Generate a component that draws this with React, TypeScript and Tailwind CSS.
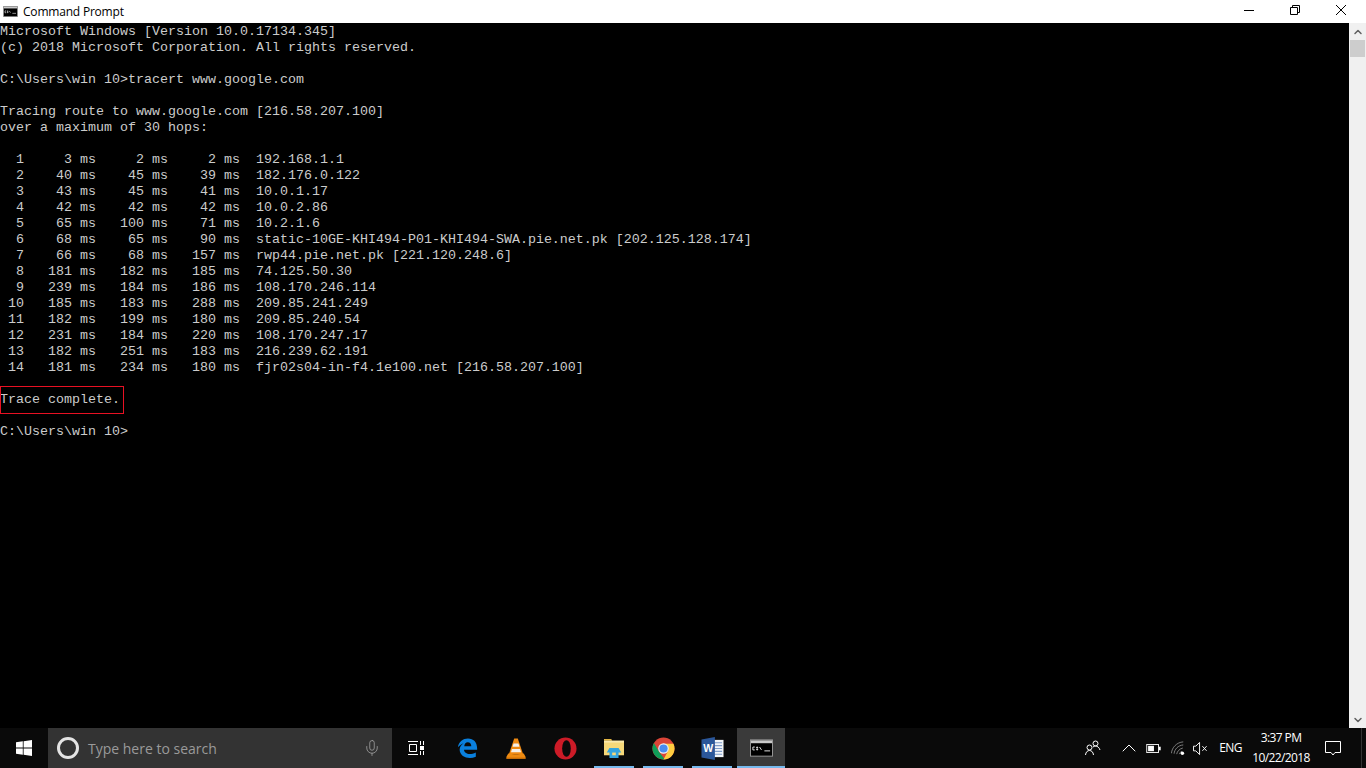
import { ChevronUp, ChevronDown, Mic } from 'lucide-react';

const consoleText = `Microsoft Windows [Version 10.0.17134.345]
(c) 2018 Microsoft Corporation. All rights reserved.

C:\\Users\\win 10>tracert www.google.com

Tracing route to www.google.com [216.58.207.100]
over a maximum of 30 hops:

  1     3 ms     2 ms     2 ms  192.168.1.1
  2    40 ms    45 ms    39 ms  182.176.0.122
  3    43 ms    45 ms    41 ms  10.0.1.17
  4    42 ms    42 ms    42 ms  10.0.2.86
  5    65 ms   100 ms    71 ms  10.2.1.6
  6    68 ms    65 ms    90 ms  static-10GE-KHI494-P01-KHI494-SWA.pie.net.pk [202.125.128.174]
  7    66 ms    68 ms   157 ms  rwp44.pie.net.pk [221.120.248.6]
  8   181 ms   182 ms   185 ms  74.125.50.30
  9   239 ms   184 ms   186 ms  108.170.246.114
 10   185 ms   183 ms   288 ms  209.85.241.249
 11   182 ms   199 ms   180 ms  209.85.240.54
 12   231 ms   184 ms   220 ms  108.170.247.17
 13   182 ms   251 ms   183 ms  216.239.62.191
 14   181 ms   234 ms   180 ms  fjr02s04-in-f4.1e100.net [216.58.207.100]

Trace complete.

C:\\Users\\win 10>`;

function CmdIcon({ className }: { className: string }) {
  return (
    <svg viewBox="0 0 24 18" className={className}>
      <rect x="0.5" y="0.5" width="23" height="17" fill="#000" stroke="#9a9a9a" />
      <rect x="1" y="1" width="22" height="3" fill="#c8c8c8" />
      <path d="M3 8h2M3 8v3h2M7 8h1v1H7zM7 10h1v1H7zM10 8l2 3M15 12h6" stroke="#e8e8e8" strokeWidth="1" fill="none" />
    </svg>
  );
}

function WindowsLogo() {
  return (
    <svg viewBox="0 0 16 16" className="w-4 h-4" fill="#fff">
      <path d="M0 2.3 6.8 1.3V7.6H0zM7.6 1.2 16 0V7.6H7.6zM0 8.4H6.8V14.7L0 13.7zM7.6 8.4H16V16L7.6 14.8z" />
    </svg>
  );
}

function EdgeIcon() {
  return (
    <svg viewBox="0 0 24 24" className="w-[21px] h-[22px]">
      <path
        fill="#0a80de"
        d="M1 11C2 4.500 7 1 12.500 1 19 1 23.500 5.500 23 14H8c.3 4.500 6.500 6.800 13.500 3v5c-8 3.500-18 .5-18.500-8C3 10.500 5 8 7.500 6.500 5 7.500 3 9 1 11zM8.300 10h8c.1-3-1.500-4.600-4-4.600-2.200 0-3.700 1.800-4 4.600z"
      />
    </svg>
  );
}

function VlcIcon() {
  return (
    <svg viewBox="0 0 22 24" className="w-[20px] h-[23px]">
      <path fill="#f08a12" d="M9 1h4l6 18H3z" />
      <path fill="#f4f0ea" d="M8.300 6.500h5.400l1.100 3.500H7.200zM6.500 12.500h9l1 3.500H5.500z" />
      <path fill="#ee8a10" d="M2.500 17.500h3c2 2 9 2 11 0h3l2 3.500v2H.5v-2z" />
      <path fill="#c96f08" d="M.5 22h21v1.500H.5z" />
    </svg>
  );
}

function OperaIcon() {
  return (
    <svg viewBox="0 0 24 24" className="w-[23px] h-[23px]">
      <circle cx="12" cy="12" r="11.500" fill="#cc1b27" />
      <ellipse cx="13" cy="12" rx="4.500" ry="8.700" fill="#0a0a0a" />
    </svg>
  );
}

function ExplorerIcon() {
  return (
    <svg viewBox="0 0 24 22" className="w-[22px] h-[20px]">
      <path fill="#e4b643" d="M1 1h8l1 2h-9z" />
      <path fill="#f6d879" d="M1 3h22v16H1z" />
      <path fill="#fbe9ad" d="M1 3h22v2H1z" />
      <path fill="#34a4de" d="M7 11h10l3 5h-3v6H7v-6H4z" />
      <path fill="#f6d879" d="M10 16h4v3h-4z" />
    </svg>
  );
}

function ChromeIcon() {
  return (
    <svg viewBox="0 0 24 24" className="w-[23px] h-[23px]">
      <circle cx="12" cy="12" r="11.500" fill="#db4437" />
      <path fill="#0f9d58" d="M12 23.500A11.500 11.500 0 0 1 2 6.300L8 16.500l5.500 7z" />
      <path fill="#ffcd40" d="M12 7h10.400A11.500 11.500 0 0 1 12 23.500L17 14z" />
      <circle cx="12" cy="12" r="5.500" fill="#f1f1f1" />
      <circle cx="12" cy="12" r="4.300" fill="#4a8cf0" />
    </svg>
  );
}

function WordIcon() {
  return (
    <svg viewBox="0 0 24 24" className="w-[23px] h-[23px]">
      <path fill="#f2f5f9" d="M10 3h13.500v18H10z" />
      <path stroke="#7f9cc9" strokeWidth="1.200" d="M14 6h8M14 9h8M14 12h8M14 15h8M14 18h8" />
      <path fill="#2b579a" d="M0.500 2.500 14.500 0v24L.5 21.500z" />
      <text x="7.500" y="16" textAnchor="middle" fontSize="11" fontWeight="700" fill="#fff" fontFamily="'Liberation Sans', sans-serif">W</text>
    </svg>
  );
}

function TaskViewIcon() {
  return (
    <svg viewBox="0 0 16 16" className="w-4 h-4" fill="none" stroke="#fff" strokeWidth="1">
      <path d="M0 1.500h10M0 14.500h10M1.500 4.500h7v7h-7zM12.500 1v4M15.500 1v4M12.500 11v4M15.500 11v4" />
      <rect x="12" y="6" width="4" height="4" fill="#fff" stroke="none" />
    </svg>
  );
}

function PeopleIcon() {
  return (
    <svg viewBox="0 0 16 16" className="w-4 h-4" fill="none" stroke="#fff" strokeWidth="1">
      <circle cx="10.500" cy="3.500" r="2.500" />
      <circle cx="4.500" cy="7.500" r="2.500" />
      <path d="M.5 15c.3-3 2-4.500 4-4.500s3.700 1.500 4 4.500M8 7c.8-.6 1.600-1 2.500-1 2 0 3.700 1.500 4.500 4" />
    </svg>
  );
}

function BatteryIcon() {
  return (
    <svg viewBox="0 0 16 10" className="w-[15px] h-[9px]" fill="none">
      <rect x="0.500" y="0.500" width="13" height="9" stroke="#fff" />
      <rect x="2" y="2" width="6.500" height="6" fill="#fff" />
      <rect x="14" y="3" width="2" height="4" fill="#fff" />
    </svg>
  );
}

function WifiIcon() {
  return (
    <svg viewBox="0 0 16 16" className="w-[14px] h-[14px]" fill="none" stroke="#8a8a8a" strokeWidth="1">
      <path d="M.5 14C1 7.500 6.500 1.500 14 1M3.500 14.500C4 9.500 8 5 14 4.500M6.500 15c.5-3 3-6 7-7M9.500 15c.4-1.500 1.500-2.800 3-3.200" />
      <circle cx="13" cy="14" r="2" fill="#fff" stroke="none" />
    </svg>
  );
}

function MuteIcon() {
  return (
    <svg viewBox="0 0 16 16" className="w-[15px] h-[15px]" fill="none" stroke="#fff" strokeWidth="1">
      <path d="M.5 5.500h2.500L7 1.500v13l-4-4H.5zM10 5.500l4.500 5M14.500 5.500l-4.500 5" />
    </svg>
  );
}

function NotificationIcon() {
  return (
    <svg viewBox="0 0 16 15" className="w-4 h-[15px]" fill="none" stroke="#fff" strokeWidth="1">
      <path d="M.5.5h15v11H10l-2 2.500L6 11.500H.5z" />
    </svg>
  );
}

function WindowButtons() {
  return (
    <div className="flex h-full items-center pr-[2px] pb-[3px]">
      <div className="w-[46px] flex justify-center">
        <div className="w-[10px] h-px bg-black" />
      </div>
      <div className="w-[46px] flex justify-center">
        <svg viewBox="0 0 10 10" className="w-[10px] h-[10px]" fill="none" stroke="#000">
          <path d="M.5 2.500h7v7h-7zM2.500 2.500V.5h7v7h-2" />
        </svg>
      </div>
      <div className="w-[46px] flex justify-center">
        <svg viewBox="0 0 10 10" className="w-[10px] h-[10px]" fill="none" stroke="#000">
          <path d="M0 0l10 10M10 0L0 10" />
        </svg>
      </div>
    </div>
  );
}

function AppButton({ children, open, active }: { children: React.ReactNode; open?: boolean; active?: boolean }) {
  return (
    <div className={`relative w-12 h-10 flex items-center justify-center ${active ? 'bg-[#3a3a3a]' : ''}`}>
      {children}
      {open && <div className="absolute bottom-0 left-[4px] right-[4px] h-0.5 bg-[#76b9ed]" />}
      {active && <div className="absolute bottom-0 left-0 right-0 h-0.5 bg-[#76b9ed]" />}
    </div>
  );
}

export default function App() {
  return (
    <div className="w-[1366px] h-[768px] flex flex-col overflow-hidden bg-black font-['Liberation_Sans',sans-serif]">
      <div className="h-[23px] bg-white flex items-center justify-between shrink-0">
        <div className="flex items-center gap-[5px] pl-[3px]">
          <CmdIcon className="w-[15px] h-[11px]" />
          <span className="text-xs tracking-[-0.2px] text-black font-['Open_Sans',sans-serif]">Command Prompt</span>
        </div>
        <WindowButtons />
      </div>

      <div className="flex-1 flex min-h-0">
        <div className="relative flex-1">
          <pre className="font-['Liberation_Mono',monospace] text-[13.333px] leading-4 text-[#cccccc] m-0 pt-px">{consoleText}</pre>
          <div className="absolute left-0 top-[363px] w-[124px] h-[28px] border border-[#e81123]" />
        </div>
        <div className="w-[17px] bg-[#f0f0f0] flex flex-col items-center justify-between">
          <div className="w-full">
            <div className="h-[17px] flex items-center justify-center">
              <ChevronUp className="w-3 h-3 text-[#606060]" strokeWidth={3} />
            </div>
            <div className="h-[17px] mx-px bg-[#cdcdcd]" />
          </div>
          <div className="h-[17px] flex items-center justify-center">
            <ChevronDown className="w-3 h-3 text-[#606060]" strokeWidth={3} />
          </div>
        </div>
      </div>

      <div className="h-10 bg-[#0a0a0a] flex items-center shrink-0">
        <div className="w-12 h-10 flex items-center justify-center">
          <WindowsLogo />
        </div>
        <div className="w-[344px] h-10 bg-[#333333] flex items-center pl-[9px] pr-[11px]">
          <div className="w-[22px] h-[22px] rounded-full border-[3px] border-[#e4e4e4]" />
          <span className="ml-[9px] pt-px flex-1 text-sm text-[#9a9a9a] font-['Open_Sans',sans-serif]">Type here to search</span>
          <Mic className="w-[18px] h-[18px] text-[#a8a8a8]" strokeWidth={1} />
        </div>
        <div className="w-12 mr-[3px] h-10 flex items-center justify-center">
          <TaskViewIcon />
        </div>
        <div className="flex gap-px">
          <AppButton><EdgeIcon /></AppButton>
          <AppButton><VlcIcon /></AppButton>
          <AppButton><OperaIcon /></AppButton>
          <AppButton open><ExplorerIcon /></AppButton>
          <AppButton open><ChromeIcon /></AppButton>
          <AppButton open><WordIcon /></AppButton>
          <AppButton active><CmdIcon className="w-[23px] h-[18px]" /></AppButton>
        </div>

        <div className="flex-1" />

        <div className="flex items-center h-10 text-white font-['Open_Sans',sans-serif]">
          <div className="w-8 flex justify-center"><PeopleIcon /></div>
          <div className="w-6 ml-2 flex justify-center">
            <ChevronUp className="w-6 h-6 text-white" strokeWidth={1} />
          </div>
          <div className="w-6 flex justify-center"><BatteryIcon /></div>
          <div className="w-[25px] flex justify-center"><WifiIcon /></div>
          <div className="w-5 flex justify-center"><MuteIcon /></div>
          <span className="w-[41px] text-center text-xs tracking-[-0.6px]">ENG</span>
          <div className="w-[60px] flex flex-col items-center text-xs leading-[20px] tracking-[-0.6px]">
            <span>3:37 PM</span>
            <span>10/22/2018</span>
          </div>
          <div className="w-11 flex justify-center"><NotificationIcon /></div>
          <div className="w-px h-10 ml-[6px] mr-1 bg-[#333333]" />
        </div>
      </div>
    </div>
  );
}
